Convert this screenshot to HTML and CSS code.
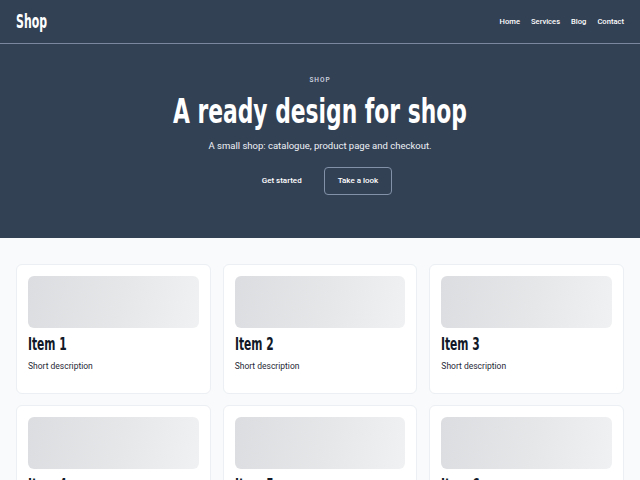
FILE: index.html
```html
<!DOCTYPE html>
<html lang="en">
<head>
<meta charset="utf-8">
<title>Shop</title>
<link rel="stylesheet" href="styles.css">
</head>
<body>
<header class="topbar">
  <div class="logo"><span class="narrow narrow-left logo-text">Shop</span></div>
  <nav class="nav">
    <a href="#">Home</a>
    <a href="#">Services</a>
    <a href="#">Blog</a>
    <a href="#">Contact</a>
  </nav>
</header>
<section class="hero">
  <div class="eyebrow">SHOP</div>
  <h1 class="title"><span class="narrow title-text">A ready design for shop</span></h1>
  <p class="lead">A small shop: catalogue, product page and checkout.</p>
  <div class="actions">
    <a class="btn" href="#">Get started</a>
    <a class="btn btn-outline" href="#">Take a look</a>
  </div>
</section>
<main class="catalog">
  <div class="grid">
    <div class="card"><div class="thumb"></div><h2 class="card-title"><span class="narrow narrow-left card-title-text">Item 1</span></h2><p class="card-text">Short description</p></div>
    <div class="card"><div class="thumb"></div><h2 class="card-title"><span class="narrow narrow-left card-title-text">Item 2</span></h2><p class="card-text">Short description</p></div>
    <div class="card"><div class="thumb"></div><h2 class="card-title"><span class="narrow narrow-left card-title-text">Item 3</span></h2><p class="card-text">Short description</p></div>
    <div class="card"><div class="thumb"></div><h2 class="card-title"><span class="narrow narrow-left card-title-text">Item 4</span></h2><p class="card-text">Short description</p></div>
    <div class="card"><div class="thumb"></div><h2 class="card-title"><span class="narrow narrow-left card-title-text">Item 5</span></h2><p class="card-text">Short description</p></div>
    <div class="card"><div class="thumb"></div><h2 class="card-title"><span class="narrow narrow-left card-title-text">Item 6</span></h2><p class="card-text">Short description</p></div>
  </div>
</main>
</body>
</html>
```
FILE: styles.css
```css
* { box-sizing: border-box; }
html, body { margin: 0; padding: 0; }
body {
  font-family: Roboto, "Liberation Sans", sans-serif;
  background: #f8fafc;
  color: #111827;
}
a { text-decoration: none; color: inherit; }

/* condensed display face approximation */
.narrow {
  display: inline-block;
  font-family: "DejaVu Sans Condensed", "DejaVu Sans", sans-serif;
  font-weight: 700;
  white-space: nowrap;
  transform-origin: center center;
}
.narrow-left { transform-origin: left center; }

.topbar {
  height: 44px;
  background: #334155;
  border-bottom: 1px solid #7a879e;
  display: flex;
  align-items: center;
  justify-content: space-between;
  padding: 0 16px;
}
.logo {
  color: #ffffff;
  line-height: 20px;
}
.logo-text {
  font-size: 19px;
  transform: scaleX(0.64);
}
.nav {
  display: flex;
  gap: 11px;
}
.nav a {
  color: #ffffff;
  font-size: 7.6px;
  font-weight: 500;
}

.hero {
  background: #334155;
  color: #ffffff;
  text-align: center;
  padding: 32px 16px 44px;
  height: 194px;
}
.eyebrow {
  font-size: 6.5px;
  letter-spacing: 1px;
  color: #d6dbe4;
  font-weight: 500;
}
.title {
  font-size: 33px;
  line-height: 40px;
  margin: 8px 0 8px;
  font-weight: 700;
}
.title-text {
  transform: scaleX(0.735);
}
.lead {
  font-size: 9.5px;
  margin: 0 0 16px;
  color: #eef1f5;
}
.actions {
  display: flex;
  justify-content: center;
  align-items: center;
  gap: 8px;
}
.btn {
  font-size: 8px;
  font-weight: 500;
  color: #ffffff;
  border: 1px solid transparent;
  border-radius: 4px;
  padding: 9px 13px;
  line-height: 8px;
}
.btn-outline {
  border-color: #8391a8;
}

.catalog {
  padding: 26px 16px 0;
}
.grid {
  display: grid;
  grid-template-columns: repeat(3, 1fr);
  gap: 11px 12px;
}
.card {
  background: #ffffff;
  border: 1px solid #eceff3;
  border-radius: 6px;
  padding: 11px 11px 20px;
  height: 130px;
}
.thumb {
  height: 52px;
  border-radius: 6px;
  background: linear-gradient(100deg, #dcdde0 0%, #e6e7e9 55%, #f0f1f2 100%);
}
.card-title {
  font-size: 17px;
  line-height: 20px;
  margin: 6px 0 7px;
  color: #111827;
}
.card-title-text {
  transform: scaleX(0.7);
}
.card-text {
  margin: 0;
  font-size: 8.5px;
  color: #1f2937;
}
```
